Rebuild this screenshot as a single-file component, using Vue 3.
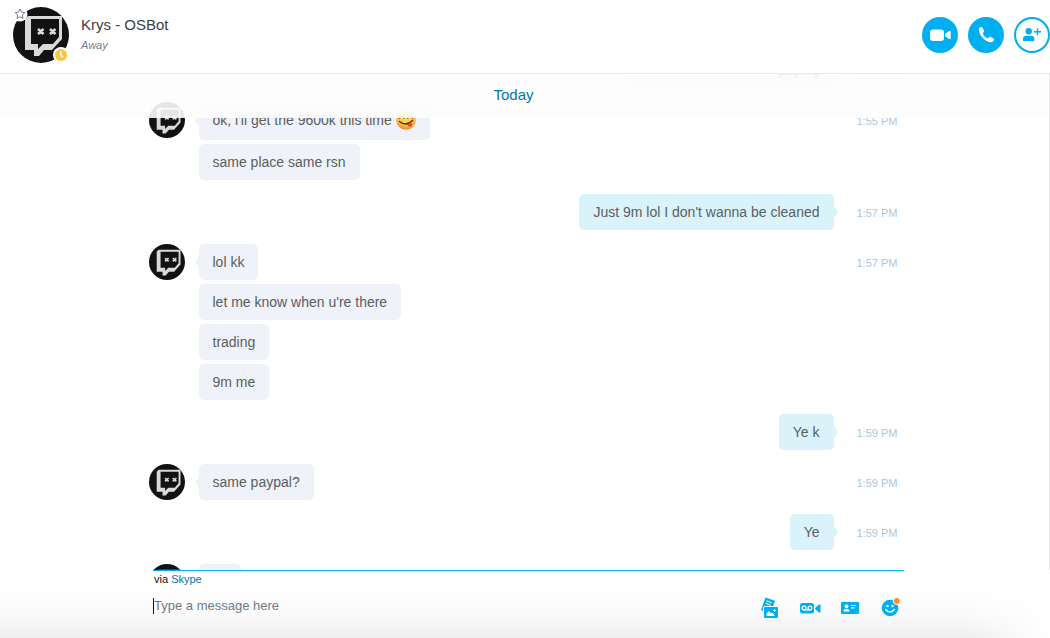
<script setup>
import { ref, onMounted } from 'vue'

const groups = [
  { mine: true, time: '1:55 PM', messages: [{ text: 'paying', wide: true }] },
  {
    mine: false,
    time: '1:55 PM',
    messages: [{ text: "ok, i'll get the 9600k this time", emoji: true }, { text: 'same place same rsn' }],
  },
  { mine: true, time: '1:57 PM', messages: [{ text: "Just 9m lol I don't wanna be cleaned" }] },
  {
    mine: false,
    time: '1:57 PM',
    messages: [{ text: 'lol kk' }, { text: "let me know when u're there" }, { text: 'trading' }, { text: '9m me' }],
  },
  { mine: true, time: '1:59 PM', messages: [{ text: 'Ye k' }] },
  { mine: false, time: '1:59 PM', messages: [{ text: 'same paypal?' }] },
  { mine: true, time: '1:59 PM', messages: [{ text: 'Ye' }] },
  { mine: false, time: '2:00 PM', messages: [{ text: 'ok' }] },
]

const history = ref(null)
const draft = ref('')

onMounted(() => {
  history.value.scrollTop = 22
})
</script>

<template>
  <div class="app">
    <svg class="defs" aria-hidden="true">
      <symbol id="avatar" viewBox="0 0 56 56">
        <circle cx="28" cy="28" r="28" fill="#121212" />
        <path
          fill="#d9d9d9"
          fill-rule="evenodd"
          d="M12 12L15 9H49V32L39 43H31L26 49H21V43H12ZM18 12V37H25V42L30 37H40L46 30V12Z"
        />
        <path d="M25 22L30.500 27M30.500 22L25 27M37 22L42.500 27M42.500 22L37 27" stroke="#d9d9d9" stroke-width="2.600" />
      </symbol>
    </svg>

    <header class="top">
      <div class="portrait">
        <svg class="face" role="img" aria-label="Krys"><use href="#avatar" /></svg>
        <svg class="star" viewBox="0 0 16 16" aria-hidden="true">
          <circle cx="8" cy="8" r="7.500" fill="#fff" />
          <path
            d="M8 3L9.500 6.100L12.800 6.600L10.400 9L11 12.400L8 10.800L5 12.400L5.600 9L3.200 6.600L6.500 6.100Z"
            fill="#fff"
            stroke="#6d7f94"
            stroke-linejoin="round"
          />
        </svg>
        <svg class="clock" viewBox="0 0 16 16" aria-hidden="true">
          <circle cx="8" cy="8" r="8" fill="#fff" />
          <circle cx="8" cy="8" r="6" fill="#fcc63f" />
          <path d="M7.700 4.500V8.200L10 10.300" fill="none" stroke="#fff" stroke-width="1.500" />
        </svg>
      </div>
      <div class="who">
        <h1>Krys - OSBot</h1>
        <p>Away</p>
      </div>
      <div class="calls">
        <button type="button" class="call" aria-label="Video call">
          <svg viewBox="0 0 36 36">
            <rect x="8" y="12.500" width="14" height="11.500" rx="3" fill="#fff" />
            <path d="M23 17L27 14H28.700V22H27L23 19Z" fill="#fff" />
          </svg>
        </button>
        <button type="button" class="call" aria-label="Voice call">
          <svg viewBox="0 0 36 36">
            <path
              d="M11 11.500C11.800 10 13.500 9.500 14.200 10.300L16 13.800C16.300 14.800 14.700 15.600 14.900 16.500C15.600 18.700 17.300 20.500 19.500 21.200C20.600 21.400 21.300 19.500 22.300 19.800L25.600 21.600C26.700 22.400 25.600 24.600 24.300 25.100C18.600 26.700 9.600 17.500 11 11.500Z"
              fill="#fff"
            />
          </svg>
        </button>
        <button type="button" class="call outline" aria-label="Add people">
          <svg viewBox="0 0 36 36" fill="#00aff0">
            <circle cx="18" cy="18" r="17" fill="#fff" stroke="#00aff0" stroke-width="2" />
            <circle cx="14.700" cy="14.300" r="3.200" />
            <path d="M9 24V21.500C9 19.700 10.300 18.700 12 18.700H17.400C19 18.700 20.300 19.700 20.300 21.500V24Z" />
            <path d="M23.500 11.200V18.200M20 14.700H27" stroke="#00aff0" stroke-width="1.400" />
          </svg>
        </button>
      </div>
    </header>

    <main class="chat">
      <h2 class="day">Today</h2>
      <div ref="history" class="history">
        <section v-for="(group, i) in groups" :key="i" class="group" :class="{ mine: group.mine }">
          <svg v-if="!group.mine" class="avatar" aria-hidden="true"><use href="#avatar" /></svg>
          <div class="bubbles">
            <p v-for="message in group.messages" :key="message.text" class="bubble" :class="{ wide: message.wide }">
              {{ message.text }}
              <svg v-if="message.emoji" class="yum" viewBox="0 0 20 20" role="img" aria-label="Yum">
                <defs>
                  <radialGradient id="skin" cx="50%" cy="35%" r="65%">
                    <stop offset="0" stop-color="#ffe36a" />
                    <stop offset=".6" stop-color="#fdc540" />
                    <stop offset="1" stop-color="#ef8b28" />
                  </radialGradient>
                </defs>
                <circle cx="10" cy="10" r="9.800" fill="url(#skin)" />
                <path
                  d="M3.500 8Q6 5 8.300 8M11.700 8Q14 5 16.500 8M3.500 11.500Q10 17 16.500 10.500"
                  fill="none"
                  stroke="#4e2b12"
                  stroke-width="1.300"
                  stroke-linecap="round"
                />
                <path d="M11 14.300L15 12.400C16.600 14.500 15.800 16.600 14.200 16.600C12.700 16.600 11.600 15.700 11 14.300Z" fill="#e8413c" />
              </svg>
            </p>
          </div>
          <time>{{ group.time }}</time>
        </section>
      </div>
    </main>

    <footer class="composer">
      <div class="inner">
        <p class="via">via <a href="#skype">Skype</a></p>
        <div class="entry">
          <input v-model="draft" type="text" placeholder="Type a message here" aria-label="Message" />
          <button type="button" class="tool" aria-label="Send files">
            <svg viewBox="0 0 28 28" fill="#00aff0">
              <path d="M9.500 3.500L19 6.800L17 12.500H8.500L7.500 17L5 16Z" />
              <path d="M10.500 6.800L15.500 8.800M9.800 9.300L14.500 11.200" stroke="#fff" stroke-width="1.100" />
              <rect x="7.500" y="12.500" width="15" height="12" rx="1.500" stroke="#fff" />
              <path d="M10.500 22V19.500L13 17L15 19.500L16.500 18.500L19 22Z" fill="#fff" />
              <path d="M18.500 15V18M17 16.500H20" stroke="#fff" />
            </svg>
          </button>
          <button type="button" class="tool" aria-label="Video message">
            <svg viewBox="0 0 28 28" fill="#00aff0">
              <rect x="4" y="9" width="14" height="10.500" rx="2.500" />
              <path d="M19 14L23 10.500H24.500V18.500H23L19 15Z" />
              <g fill="none" stroke="#fff" stroke-width="1.300">
                <circle cx="8" cy="14" r="1.900" />
                <circle cx="14" cy="14" r="1.900" />
                <path d="M8 15.900H14" />
              </g>
            </svg>
          </button>
          <button type="button" class="tool" aria-label="Send contacts">
            <svg viewBox="0 0 28 28" fill="#00aff0">
              <rect x="5" y="8" width="18" height="12" rx="1" />
              <g fill="#fff">
                <circle cx="10.500" cy="12.300" r="1.900" />
                <path d="M7.500 17.500Q7.500 14.800 10.500 14.800Q13.500 14.800 13.500 17.500Z" />
                <path d="M15 11H20V12.100H15ZM15 13.300H18.500V14.400H15Z" />
              </g>
            </svg>
          </button>
          <button type="button" class="tool" aria-label="Emoticons">
            <svg viewBox="0 0 28 28">
              <circle cx="14" cy="14" r="8.300" fill="#00aff0" />
              <circle cx="11.500" cy="12" r="1.200" fill="#fff" />
              <circle cx="16.500" cy="12" r="1.200" fill="#fff" />
              <path d="M9.700 15.500Q14 20.500 18.300 15.500" fill="none" stroke="#fff" stroke-width="1.500" stroke-linecap="round" />
              <circle cx="20.800" cy="7" r="3.500" fill="#ff8c33" stroke="#fff" />
            </svg>
          </button>
        </div>
      </div>
    </footer>
  </div>
</template>

<style>
html,
body {
  margin: 0;
  background: #fff;
}
</style>

<style scoped>
.app {
  display: flex;
  flex-direction: column;
  height: 100vh;
  font-family: 'Liberation Sans', Arial, sans-serif;
  color: #5a5f63;
}

.app * {
  box-sizing: border-box;
}

.defs {
  position: absolute;
  width: 0;
  height: 0;
}

h1,
h2,
p {
  margin: 0;
  font-weight: 400;
}

button {
  padding: 0;
  border: 0;
  background: none;
  cursor: pointer;
}

button svg {
  display: block;
  width: 100%;
  height: 100%;
}

.top {
  display: flex;
  align-items: flex-start;
  gap: 12px;
  height: 74px;
  flex: none;
  padding: 7px 0 0 13px;
  border-bottom: 1px solid #e3ebf0;
}

.portrait {
  position: relative;
  width: 56px;
  height: 56px;
}

.face {
  display: block;
  width: 56px;
  height: 56px;
}

.star,
.clock {
  position: absolute;
  width: 16px;
  height: 16px;
}

.star {
  top: -1px;
  left: -1px;
}

.clock {
  right: 0;
  bottom: 0;
}

.who {
  flex: 1;
  padding-top: 8px;
}

h1 {
  font-size: 15px;
  line-height: 20px;
  color: #3c4045;
}

.who p {
  font-size: 11px;
  line-height: 20px;
  font-style: italic;
  color: #6d7f94;
}

.calls {
  display: flex;
  gap: 10px;
  padding-top: 10px;
}

.call {
  width: 36px;
  height: 36px;
  border-radius: 50%;
  background: #00aff0;
}

.call.outline {
  background: #fff;
}

.chat {
  position: relative;
  flex: 1;
  min-height: 0;
  border-right: 1px solid #e3e7ea;
}

.day {
  position: absolute;
  inset: 0 0 auto;
  z-index: 1;
  height: 44px;
  padding-right: 22px;
  background: rgba(253, 253, 253, 0.9);
  font-size: 15px;
  line-height: 42px;
  text-align: center;
  color: #0078a8;
}

.history {
  display: flex;
  flex-direction: column;
  gap: 14px;
  width: 752px;
  max-width: 100%;
  height: 100%;
  margin: 0 auto;
  overflow: hidden;
}

.group {
  display: flex;
  flex: none;
  align-items: flex-start;
}

.avatar {
  flex: none;
  width: 36px;
  height: 36px;
  margin-right: 14px;
}

.bubbles {
  display: flex;
  flex: 1;
  flex-direction: column;
  align-items: flex-start;
  gap: 4px;
}

.mine .bubbles {
  align-items: flex-end;
}

.bubble {
  position: relative;
  padding: 8px 14px;
  border-radius: 5px;
  background: #eff2f8;
  font-size: 14px;
  line-height: 20px;
}

.mine .bubble {
  background: #daf3fb;
}

.wide {
  width: 208px;
  text-align: right;
}

.bubble:first-child::before {
  content: '';
  position: absolute;
  top: 12px;
  left: -4px;
  border: solid transparent;
  border-width: 6px 4px 6px 0;
  border-right-color: #eff2f8;
}

.mine .bubble:first-child::before {
  right: -4px;
  left: auto;
  border-width: 6px 0 6px 4px;
  border-left-color: #daf3fb;
}

.yum {
  width: 20px;
  height: 20px;
  margin-bottom: 2px;
  vertical-align: middle;
}

time {
  width: 67px;
  padding: 2px 0 0 23px;
  font-size: 11px;
  line-height: 34px;
  white-space: nowrap;
  color: #b0c6d9;
}

.composer {
  flex: none;
  padding-left: 7px;
  background:
    linear-gradient(to right, transparent 92%, #fff),
    linear-gradient(#fff 30%, #fafafa 65%, #efefef);
}

.inner {
  width: 751px;
  max-width: 100%;
  height: 68px;
  margin: 0 auto;
  border-top: 1px solid #00aff0;
}

.via {
  padding-left: 1px;
  font-size: 11px;
  line-height: 16px;
  color: #111;
}

.via a {
  color: #0078a8;
  text-decoration: none;
}

.entry {
  display: flex;
  align-items: center;
  gap: 12px;
  padding-top: 7px;
}

input {
  flex: 1;
  min-width: 0;
  height: 16px;
  margin-bottom: 4px;
  padding: 0;
  border: 0;
  border-left: 1px solid #111;
  outline: 0;
  background: none;
  font: 13px/16px 'Liberation Sans', Arial, sans-serif;
  color: #3c4045;
}

input::placeholder {
  color: #6d7a88;
  opacity: 1;
}

.tool {
  flex: none;
  width: 28px;
  height: 28px;
}
</style>
